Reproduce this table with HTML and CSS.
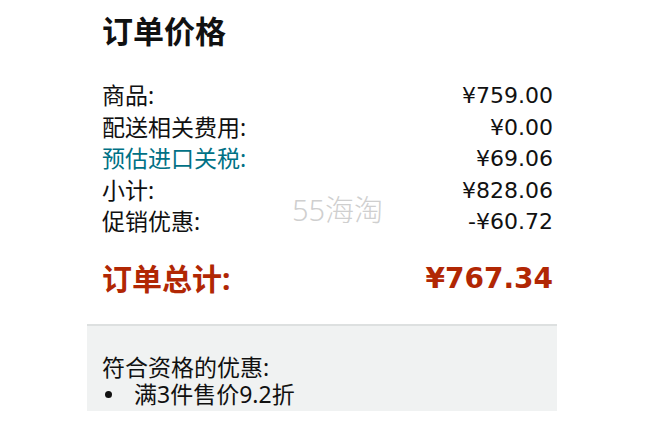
FILE: index.html
```html
<!DOCTYPE html>
<html lang="zh-CN">

<head>
    <meta charset="UTF-8">
    <meta name="viewport" content="width=device-width, initial-scale=1.0">
    <title>订单价格</title>
    <link rel="stylesheet" href="styles.css">
</head>

<body>
    <div class="summary">
        <h3 class="title">订单价格</h3>

        <div class="rows">
            <div class="row"><span>商品:</span><span class="num">¥759.00</span></div>
            <div class="row"><span>配送相关费用:</span><span class="num">¥0.00</span></div>
            <div class="row"><span class="link">预估进口关税:</span><span class="num">¥69.06</span></div>
            <div class="row"><span>小计:</span><span class="num">¥828.06</span></div>
            <div class="row"><span>促销优惠:</span><span class="num">-¥60.72</span></div>
        </div>

        <div class="row total"><span>订单总计:</span><span class="num">¥767.34</span></div>

        <div class="promo">
            <p>符合资格的优惠:</p>
            <ul>
                <li>满3件售价9.2折</li>
            </ul>
        </div>

        <div class="watermark">55海淘</div>
    </div>
</body>

</html>
```

FILE: styles.css
```css
body {
    margin: 0;
    background: #fff;
    color: #111;
    font-family: "Noto Sans", "Noto Sans CJK SC", sans-serif;
}

.summary {
    position: relative;
    width: 470px;
    margin-left: 87px;
}

.title {
    margin: 11px 4px 29px 15px;
    font-size: 31px;
    line-height: 40px;
    font-weight: 700;
}

.rows {
    margin: 0 4px 0 15px;
    font-size: 23px;
}

.row {
    display: flex;
    justify-content: space-between;
    align-items: center;
    height: 31.5px;
    line-height: 31.5px;
}

.num {
    font-family: "DejaVu Sans", sans-serif;
    font-size: 22px;
}

.link {
    color: #007185;
}

.total {
    margin: 21px 4px 25px 15px;
    height: 40px;
    line-height: 40px;
    font-size: 30px;
    font-weight: 700;
    color: #b12704;
}

.total .num {
    font-size: 28px;
}

.promo {
    background: #f0f2f2;
    border-top: 2px solid #dde0e0;
    padding: 28px 15px 3px;
    font-size: 23px;
    line-height: 27px;
}

.promo p {
    margin: 0;
}

.promo ul {
    margin: 0;
    padding: 0;
    list-style: none;
}

.promo li {
    display: flex;
    align-items: center;
}

.promo li::before {
    content: "";
    width: 7px;
    height: 7px;
    border-radius: 50%;
    background: #111;
    margin: 0 22px 0 3px;
}

.watermark {
    position: absolute;
    left: 205px;
    top: 183px;
    font-size: 29px;
    line-height: 32px;
    font-weight: 300;
    color: #cfcfcf;
}
```
